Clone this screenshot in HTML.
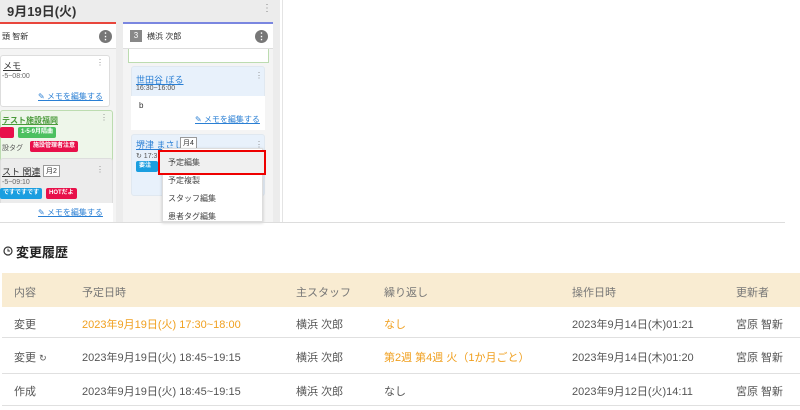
<!DOCTYPE html><html><head><meta charset="utf-8"><style>
*{box-sizing:border-box;margin:0;padding:0}
body{width:800px;height:410px;overflow:hidden;background:#fff;font-family:"Liberation Sans","Noto Sans CJK JP",sans-serif;position:relative;color:#333}
.a{position:absolute}
.panel{left:0;top:0;width:280px;height:222px;background:#ececec}
.card{position:absolute;background:#fff;border:1px solid #ddd;border-radius:3px}
.lnk{color:#2a7fd4;text-decoration:underline;font-size:8px}
.tag{position:absolute;color:#fff;font-size:6px;font-weight:bold;padding:1px 3px;border-radius:2px;height:11px;line-height:9px}
.dot{position:absolute;width:13px;height:13px;border-radius:50%;background:#777;color:#fff;font-size:9px;text-align:center;line-height:13px;font-weight:bold}
.t{font-size:11px;color:#555}
.th{font-size:11px;color:#777}
.or{color:#f0a020}
</style></head><body>
<div class="a panel"></div>
<div class="a" style="left:282px;top:0;width:1px;height:222px;background:#e4e4e4"></div>
<div class="a" style="left:7px;top:1px;font-size:13px;font-weight:bold;color:#333">9月19日(火)</div>
<div class="a" style="left:262px;top:3px;font-size:10px;color:#888">⋮</div>
<!-- left column -->
<div class="a" style="left:0;top:22px;width:116px;height:200px;background:#f4f4f4"></div>
<div class="a" style="left:0;top:22px;width:116px;height:2px;background:#e8463c"></div>
<div class="a" style="left:0;top:24px;width:116px;height:25px;background:#fff;border-bottom:1px solid #ddd"></div>
<div class="a" style="left:2px;top:31px;font-size:8px">頭 智新</div>
<div class="dot" style="left:99px;top:30px">⋮</div>
<div class="card" style="left:0;top:55px;width:110px;height:52px"></div>
<div class="a" style="left:3px;top:59px;font-size:9px;text-decoration:underline">メモ</div>
<div class="a" style="left:2px;top:73px;font-size:7px;color:#666">-5~08:00</div>
<div class="a" style="left:96px;top:58px;font-size:8px;color:#888">⋮</div>
<div class="a lnk" style="left:38px;top:91px">✎ メモを編集する</div>
<div class="card" style="left:0;top:110px;width:113px;height:112px;background:#eef6ea;border-color:#bcdcb0"></div>
<div class="a" style="left:2px;top:115px;font-size:8px;color:#4a9a3a;text-decoration:underline;font-weight:bold">テスト施設福岡</div>
<div class="tag" style="left:0;top:127px;width:14px;background:#e8104a"></div>
<div class="tag" style="left:18px;top:127px;background:#4cc060">1-5-9月隔曲</div>
<div class="a" style="left:2px;top:143px;font-size:7px;color:#555">設タグ</div>
<div class="tag" style="left:30px;top:141px;background:#e8104a">施設管理者注意</div>
<div class="a" style="left:100px;top:113px;font-size:8px;color:#888">⋮</div>
<div class="card" style="left:0;top:158px;width:113px;height:64px;background:#ececec"></div>
<div class="a" style="left:2px;top:165px;font-size:9px;text-decoration:underline">スト 関連</div>
<div class="a" style="left:43px;top:165px;font-size:7px;border:1px solid #999;padding:0 2px;background:#fff">月2</div>
<div class="a" style="left:2px;top:179px;font-size:7px;color:#666">-5~09:10</div>
<div class="tag" style="left:0;top:188px;background:#1a9ee0">ですですです</div>
<div class="tag" style="left:46px;top:188px;background:#e8104a">HOTだよ</div>
<div class="a" style="left:0;top:203px;width:113px;height:19px;background:#fff"></div>
<div class="a lnk" style="left:38px;top:207px">✎ メモを編集する</div>
<div class="a" style="left:96px;top:165px;font-size:8px;color:#888">⋮</div>
<!-- right column -->
<div class="a" style="left:123px;top:22px;width:150px;height:200px;background:#f4f4f4"></div>
<div class="a" style="left:123px;top:22px;width:150px;height:2px;background:#7a86e0"></div>
<div class="a" style="left:123px;top:24px;width:150px;height:25px;background:#fff;border-bottom:1px solid #ddd"></div>
<div class="a" style="left:130px;top:30px;width:12px;height:12px;background:#888;color:#fff;font-size:8px;text-align:center;line-height:12px">3</div>
<div class="a" style="left:147px;top:31px;font-size:8px">横浜 次郎</div>
<div class="dot" style="left:255px;top:30px">⋮</div>
<div class="a" style="left:128px;top:49px;width:141px;height:14px;border:1px solid #bcdcb0;border-top:none;background:#fff"></div>
<div class="card" style="left:131px;top:66px;width:134px;height:64px;background:#e8f1fb;border-color:#e0e8f0"></div>
<div class="a" style="left:131px;top:96px;width:134px;height:34px;background:#fff"></div>
<div class="a lnk" style="left:136px;top:73px;font-size:9px">世田谷 ぼる</div>
<div class="a" style="left:136px;top:85px;font-size:7px;color:#555">16:30~16:00</div>
<div class="a" style="left:255px;top:71px;font-size:8px;color:#888">⋮</div>
<div class="a" style="left:139px;top:101px;font-size:8px">b</div>
<div class="a lnk" style="left:195px;top:114px">✎ メモを編集する</div>
<div class="card" style="left:131px;top:134px;width:134px;height:62px;background:#e8f1fb;border-color:#e0e8f0"></div>
<div class="a lnk" style="left:136px;top:138px;font-size:9px">堺津 まさし</div>
<div class="a" style="left:180px;top:137px;font-size:7px;border:1px solid #999;padding:0 2px;background:#fff">月4</div>
<div class="a" style="left:136px;top:152px;font-size:7px;color:#555">↻ 17:3</div>
<div class="tag" style="left:136px;top:161px;width:22px;background:#1a9ee0">要注</div>
<div class="a" style="left:255px;top:140px;font-size:8px;color:#888">⋮</div>
<div class="a" style="left:162px;top:148px;width:101px;height:74px;background:#fff;border:1px solid #ddd;box-shadow:0 1px 3px rgba(0,0,0,.2)"></div>
<div class="a" style="left:158px;top:150px;width:108px;height:25px;border:2px solid #e00;background:#f0f0f0"></div>
<div class="a" style="left:168px;top:157px;font-size:8px;color:#444">予定編集</div>
<div class="a" style="left:168px;top:175px;font-size:8px;color:#444">予定複製</div>
<div class="a" style="left:168px;top:193px;font-size:8px;color:#444">スタッフ編集</div>
<div class="a" style="left:168px;top:211px;font-size:8px;color:#444">患者タグ編集</div>
<div class="a" style="left:0;top:222px;width:785px;height:1px;background:#ddd"></div>
<!-- history -->
<svg class="a" style="left:3px;top:246px" width="10" height="10" viewBox="0 0 10 10"><circle cx="5" cy="5" r="4" fill="none" stroke="#333" stroke-width="1.2"/><path d="M5 2.6V5h2" fill="none" stroke="#333" stroke-width="1"/></svg>
<div class="a" style="left:16px;top:242px;font-size:13px;font-weight:bold;color:#222">変更履歴</div>
<div class="a" style="left:2px;top:273px;width:798px;height:34px;background:#f9ecd2"></div>
<div class="a" style="left:2px;top:337px;width:798px;height:1px;background:#e0e0e0"></div>
<div class="a" style="left:2px;top:373px;width:798px;height:1px;background:#e0e0e0"></div>
<div class="a" style="left:2px;top:405px;width:798px;height:1px;background:#e0e0e0"></div>
<div class="a th" style="left:14px;top:284px">内容</div>
<div class="a th" style="left:82px;top:284px">予定日時</div>
<div class="a th" style="left:296px;top:284px">主スタッフ</div>
<div class="a th" style="left:384px;top:284px">繰り返し</div>
<div class="a th" style="left:572px;top:284px">操作日時</div>
<div class="a th" style="left:736px;top:284px">更新者</div>

<div class="a t" style="left:14px;top:316px">変更</div>
<div class="a t or" style="left:82px;top:316px">2023年9月19日(火) 17:30~18:00</div>
<div class="a t" style="left:296px;top:316px">横浜 次郎</div>
<div class="a t or" style="left:384px;top:316px">なし</div>
<div class="a t" style="left:572px;top:316px">2023年9月14日(木)01:21</div>
<div class="a t" style="left:736px;top:316px">宮原 智新</div>

<div class="a t" style="left:14px;top:349px">変更 <span style="font-size:9px">↻</span></div>
<div class="a t" style="left:82px;top:349px">2023年9月19日(火) 18:45~19:15</div>
<div class="a t" style="left:296px;top:349px">横浜 次郎</div>
<div class="a t or" style="left:384px;top:349px">第2週 第4週 火（1か月ごと）</div>
<div class="a t" style="left:572px;top:349px">2023年9月14日(木)01:20</div>
<div class="a t" style="left:736px;top:349px">宮原 智新</div>

<div class="a t" style="left:14px;top:383px">作成</div>
<div class="a t" style="left:82px;top:383px">2023年9月19日(火) 18:45~19:15</div>
<div class="a t" style="left:296px;top:383px">横浜 次郎</div>
<div class="a t" style="left:384px;top:383px">なし</div>
<div class="a t" style="left:572px;top:383px">2023年9月12日(火)14:11</div>
<div class="a t" style="left:736px;top:383px">宮原 智新</div>
</body></html>
